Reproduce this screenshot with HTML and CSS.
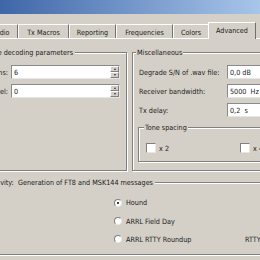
FILE: index.html
```html
<!DOCTYPE html>
<html lang="en">
<head>
	<meta charset="UTF-8">
	<title>Settings - Advanced</title>
	<link rel="stylesheet" href="styles.css">
</head>
<body>
	<div class="titlebar"></div>

	<div class="tabs">
		<div class="tab tab-radio">Radio</div>
		<div class="tab tab-macros">Tx Macros</div>
		<div class="tab tab-reporting">Reporting</div>
		<div class="tab tab-freq">Frequencies</div>
		<div class="tab tab-colors">Colors</div>
		<div class="tab tab-advanced active">Advanced</div>
	</div>

	<div class="pane">
		<div class="top-row">
			<!-- left group, mostly off the picture -->
			<div class="group group-jt65">
				<div class="group-title">JT65 VHF/UHF/Microwave decoding parameters</div>
				<div class="form form-jt65">
					<label class="label">Random erasure patterns:</label>
					<div class="edit spin">
						<span class="value">6</span>
						<div class="spin-btns">
							<span class="spin-btn up"></span>
							<span class="spin-btn down"></span>
						</div>
					</div>
					<label class="label">Aggressive decoding level:</label>
					<div class="edit spin">
						<span class="value">0</span>
						<div class="spin-btns">
							<span class="spin-btn up"></span>
							<span class="spin-btn down"></span>
						</div>
					</div>
				</div>
			</div>

			<div class="group group-misc">
				<div class="group-title">Miscellaneous</div>
				<div class="form form-misc">
					<label class="label">Degrade S/N of .wav file:</label>
					<div class="edit"><span class="value">0,0 dB</span></div>
					<label class="label">Receiver bandwidth:</label>
					<div class="edit"><span class="value">5000  Hz</span></div>
					<label class="label">Tx delay:</label>
					<div class="edit"><span class="value">0,2  s</span></div>
				</div>

				<div class="group group-tone">
					<div class="group-title">Tone spacing</div>
					<div class="checks">
						<div class="check"><span class="box"></span>x 2</div>
						<div class="check"><span class="box"></span>x 4</div>
					</div>
				</div>
			</div>
		</div>

		<div class="group group-special">
			<div class="group-title">Special operating activity:&nbsp; Generation of FT8 and MSK144 messages</div>
			<div class="radios">
				<div class="radio"><span class="dot checked"></span>Hound</div>
				<div></div>
				<div class="radio"><span class="dot"></span>ARRL Field Day</div>
				<div></div>
				<div class="radio"><span class="dot"></span>ARRL RTTY Roundup</div>
				<div class="exch">RTTY RU Exch:</div>
			</div>
		</div>
	</div>
</body>
</html>
```

FILE: styles.css
```css
* {
	box-sizing: border-box;
}
body {
	margin: 0;
	width: 260px;
	height: 260px;
	overflow: hidden;
	background: #d4d0c8;
	color: #1a1a1a;
	font: 7.2px/9px "DejaVu Sans Condensed", "DejaVu Sans", sans-serif;
	font-stretch: condensed;
	white-space: nowrap;
}

.titlebar {
	height: 14px;
	background: linear-gradient(to right, #3f66a8, #a8c5ea);
}

/* tab bar */
.tabs {
	display: flex;
	align-items: flex-end;
	height: 16px;
	margin-top: 8px;
}
.tab {
	flex-shrink: 0;
	display: flex;
	align-items: center;
	justify-content: center;
	height: 14px;
	padding-top: 1px;
	border-top: 1px solid #fff;
	border-left: 1px solid #fff;
	border-right: 1px solid #707070;
}
.tab-radio { width: 35px; margin-left: -17px; }
.tab-macros { width: 51px; }
.tab-reporting { width: 47px; }
.tab-freq { width: 57px; }
.tab-colors { width: 36px; }
.tab-advanced { width: 48px; }
.tab.active {
	position: relative;
	z-index: 1;
	height: 17px;
	margin-bottom: -1px;
	margin-left: -1px;
	padding-top: 0;
	padding-bottom: 2px;
	background: #d4d0c8;
}

.pane {
	border-top: 1px solid #fff;
}

/* group boxes */
.group {
	flex-shrink: 0;
	border: 1px solid #808080;
	box-shadow: inset 1px 1px #fff, 1px 1px #fff;
}
.group-title {
	display: flex;
	width: fit-content;
	height: 9px;
	margin-top: -5px;
	padding: 0 1px;
	background: #d4d0c8;
}

.top-row {
	display: flex;
	height: 119px;
	margin-top: 13px;
}
.group-jt65 {
	width: 277px;
	margin-left: -150px;
}
.group-jt65 .group-title {
	width: 224px;
	padding-right: 2px;
	justify-content: flex-end;
}
.group-misc {
	width: 200px;
	margin-left: 5px;
}
.group-misc > .group-title {
	margin-left: 3px;
}

/* label + edit rows */
.form {
	display: grid;
	row-gap: 5px;
	align-items: center;
	margin-top: 8px;
}
.form-jt65 {
	grid-template-columns: 1fr 109px;
	column-gap: 3px;
	padding-right: 6px;
}
.form-jt65 .label {
	text-align: right;
}
.form-misc {
	grid-template-columns: 88px 80px;
	padding-left: 6px;
}
.edit {
	display: flex;
	align-items: center;
	height: 14px;
	padding-left: 2px;
	background: #fff;
	border: 1px solid;
	border-color: #8a8a8a #e6e6e6 #e6e6e6 #8a8a8a;
	white-space: pre;
}
.value {
	flex: 1;
}
.spin-btns {
	display: flex;
	flex-direction: column;
	align-self: stretch;
	width: 9px;
}
.spin-btn {
	flex: 1;
	display: flex;
	align-items: center;
	justify-content: center;
	background: #d4d0c8;
	border: 1px solid;
	border-color: #fff #808080 #808080 #fff;
}
.spin-btn::before {
	content: "";
	border-left: 1.5px solid transparent;
	border-right: 1.5px solid transparent;
}
.spin-btn.up::before {
	border-bottom: 2px solid #333;
}
.spin-btn.down::before {
	border-top: 2px solid #333;
}

/* tone spacing */
.group-tone {
	height: 35px;
	margin: 10px 0 0 5px;
}
.group-tone .group-title {
	margin-left: 5px;
}
.checks {
	display: flex;
	margin-top: 11px;
	padding-left: 7px;
}
.check {
	flex-shrink: 0;
	display: flex;
	align-items: center;
	gap: 3px;
	width: 94px;
}
.box {
	width: 10px;
	height: 10px;
	background: #fff;
	border: 1px solid;
	border-color: #808080 #e6e6e6 #e6e6e6 #808080;
}

/* special activity */
.group-special {
	width: 460px;
	margin: 11px 0 0 -150px;
	padding-bottom: 6px;
}
.group-special .group-title {
	width: 304px;
	padding-right: 2px;
	justify-content: flex-end;
}
.radios {
	display: grid;
	grid-template-columns: 131px auto;
	grid-template-rows: 19px 18px 18px;
	align-items: center;
	margin-top: 6px;
	padding-left: 263px;
}
.radio {
	display: flex;
	align-items: center;
	gap: 4px;
}
.dot {
	display: flex;
	align-items: center;
	justify-content: center;
	width: 8px;
	height: 8px;
	border-radius: 50%;
	background: #fff;
	border: 1px solid;
	border-color: #808080 #e6e6e6 #e6e6e6 #808080;
}
.dot.checked::before {
	content: "";
	width: 2px;
	height: 2px;
	border-radius: 50%;
	background: #000;
}
```
